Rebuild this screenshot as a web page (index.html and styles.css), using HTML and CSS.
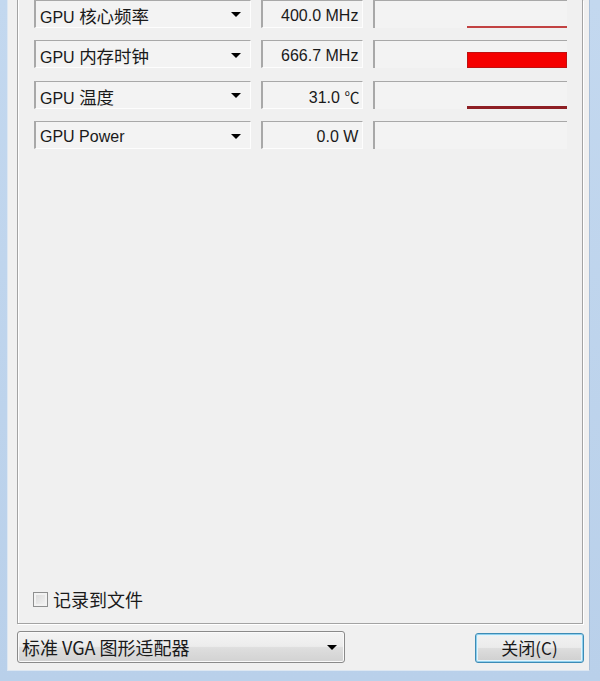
FILE: index.html
```html
<!DOCTYPE html>
<html lang="zh-CN">
<head>
<meta charset="utf-8">
<title>GPU 传感器</title>
<link rel="stylesheet" href="styles.css">
</head>
<body>
<div class="frame">
  <div class="client">
    <div class="group">
      <div class="rows">
        <div class="row">
          <div class="combo">GPU <span class="zh">核心频率</span><span class="arrow"></span></div>
          <div class="value">400.0 MHz</div>
          <div class="graph"><div class="bar bar-thin"></div></div>
        </div>
        <div class="row">
          <div class="combo">GPU <span class="zh">内存时钟</span><span class="arrow"></span></div>
          <div class="value">666.7 MHz</div>
          <div class="graph"><div class="bar bar-full"></div></div>
        </div>
        <div class="row">
          <div class="combo">GPU <span class="zh">温度</span><span class="arrow"></span></div>
          <div class="value">31.0 <span class="deg">℃</span></div>
          <div class="graph"><div class="bar bar-mid"></div></div>
        </div>
        <div class="row">
          <div class="combo">GPU Power<span class="arrow"></span></div>
          <div class="value">0.0 W</div>
          <div class="graph"></div>
        </div>
      </div>
      <label class="check">
        <span class="box"></span>
        <span class="check-label">记录到文件</span>
      </label>
    </div>
    <div class="bottom">
      <div class="adapter">
        <span class="adapter-text">标准 VGA 图形适配器</span>
        <span class="arrow"></span>
      </div>
      <div class="close-btn">关闭(C)</div>
    </div>
  </div>
</div>
</body>
</html>
```

FILE: styles.css
```css
html, body {
  margin: 0;
  padding: 0;
}

body {
  width: 600px;
  height: 681px;
  overflow: hidden;
  background: #bcd3ec;
  font-family: "Liberation Sans", "Noto Sans CJK SC", sans-serif;
  color: #1a1a1a;
}

.frame {
  height: 681px;
  padding: 0 10px 0 7px;
  box-sizing: border-box;
  background: linear-gradient(180deg, #c3d8ef 0%, #b9d0ea 100%);
}

.client {
  height: 671px;
  background: #f0f0f0;
  border-left: 1px solid #dde7f2;
  border-right: 1px solid #a9bfd8;
  border-bottom: 1px solid #dde7f2;
  box-sizing: border-box;
  display: flex;
  flex-direction: column;
}

.group {
  margin: 0 6px 0 9px;
  height: 624px;
  box-sizing: border-box;
  border: 1px solid #a3a3a3;
  border-top: none;
  box-shadow: inset 1px 0 0 #fff, 1px 1px 0 #fff;
  display: flex;
  flex-direction: column;
  padding: 0 15px 14px 16px;
}

.rows {
  display: flex;
  flex-direction: column;
  gap: 12.5px;
  margin-top: -0.5px;
}

.row {
  display: flex;
  height: 28px;
  gap: 10px;
}

.combo, .value, .graph {
  box-sizing: border-box;
  height: 28px;
  border-top: 1px solid #a8a8a8;
  border-left: 2px solid #a8a8a8;
  border-bottom: 1px solid #fdfdfd;
  border-right: 1px solid #fdfdfd;
  background: #f3f3f3;
}

.combo {
  width: 217px;
  position: relative;
  padding: 3px 0 0 4px;
  line-height: 24px;
  font-size: 16px;
  white-space: nowrap;
}

.zh {
  font-family: "Noto Sans CJK SC", sans-serif;
  font-size: 17.5px;
}

.deg {
  font-family: "Noto Sans CJK SC", sans-serif;
  font-size: 15px;
  letter-spacing: -1px;
}

.arrow {
  position: absolute;
  right: 9px;
  top: 11.5px;
  width: 0;
  height: 0;
  border-left: 5px solid transparent;
  border-right: 5px solid transparent;
  border-top: 5.5px solid #000;
}

.value {
  width: 103px;
  padding: 3px 4px 0 0;
  line-height: 24px;
  font-size: 16px;
  text-align: right;
  white-space: nowrap;
}

.graph {
  width: 194px;
  display: flex;
  flex-direction: column;
  justify-content: flex-end;
  align-items: flex-end;
  border-right: none;
  border-bottom: none;
}

.bar {
  width: 100px;
}

.bar-thin {
  height: 1.5px;
  background: #c24242;
}

.bar-full {
  height: 16px;
  box-sizing: border-box;
  background: #f50000;
  border: 1px solid #c01010;
}

.bar-mid {
  height: 2.5px;
  background: #8e1f24;
}

.check {
  margin-top: auto;
  margin-left: -1px;
  display: flex;
  align-items: center;
  gap: 5px;
  height: 20px;
}

.box {
  width: 15px;
  height: 15px;
  box-sizing: border-box;
  border: 1px solid #8e8f8f;
  background: linear-gradient(135deg, #d6d6d6 0%, #f6f6f6 100%);
  box-shadow: inset 0 0 0 2px #f2f2f2;
}

.check-label {
  font-family: "Noto Sans CJK SC", sans-serif;
  font-size: 18px;
  line-height: 20px;
}

.bottom {
  display: flex;
  justify-content: space-between;
  align-items: center;
  margin: 6px 5px 0 9px;
  height: 34px;
}

.adapter {
  position: relative;
  width: 328px;
  height: 32px;
  box-sizing: border-box;
  border: 1px solid #8a8a8a;
  border-radius: 3px;
  background: linear-gradient(180deg, #f4f4f4 0%, #ececec 48%, #dedede 52%, #d2d2d2 100%);
  box-shadow: inset 0 0 0 1px #fafafa;
  padding-left: 4px;
  line-height: 30px;
  font-family: "Noto Sans CJK SC", sans-serif;
  font-size: 18px;
  white-space: nowrap;
}

.adapter .arrow {
  right: 7px;
  top: 13px;
}

.close-btn {
  width: 109px;
  height: 30px;
  box-sizing: border-box;
  border: 1px solid #3d8bb5;
  border-radius: 3px;
  background: linear-gradient(180deg, #f2f2f2 0%, #ebebeb 48%, #dddddd 52%, #cfcfcf 100%);
  box-shadow: inset 0 0 0 1px #8fd0ee, inset 0 0 0 2px #e4f4fb;
  text-align: center;
  line-height: 28px;
  font-family: "Noto Sans CJK SC", sans-serif;
  font-size: 17px;
  margin-top: 2px;
}
```
